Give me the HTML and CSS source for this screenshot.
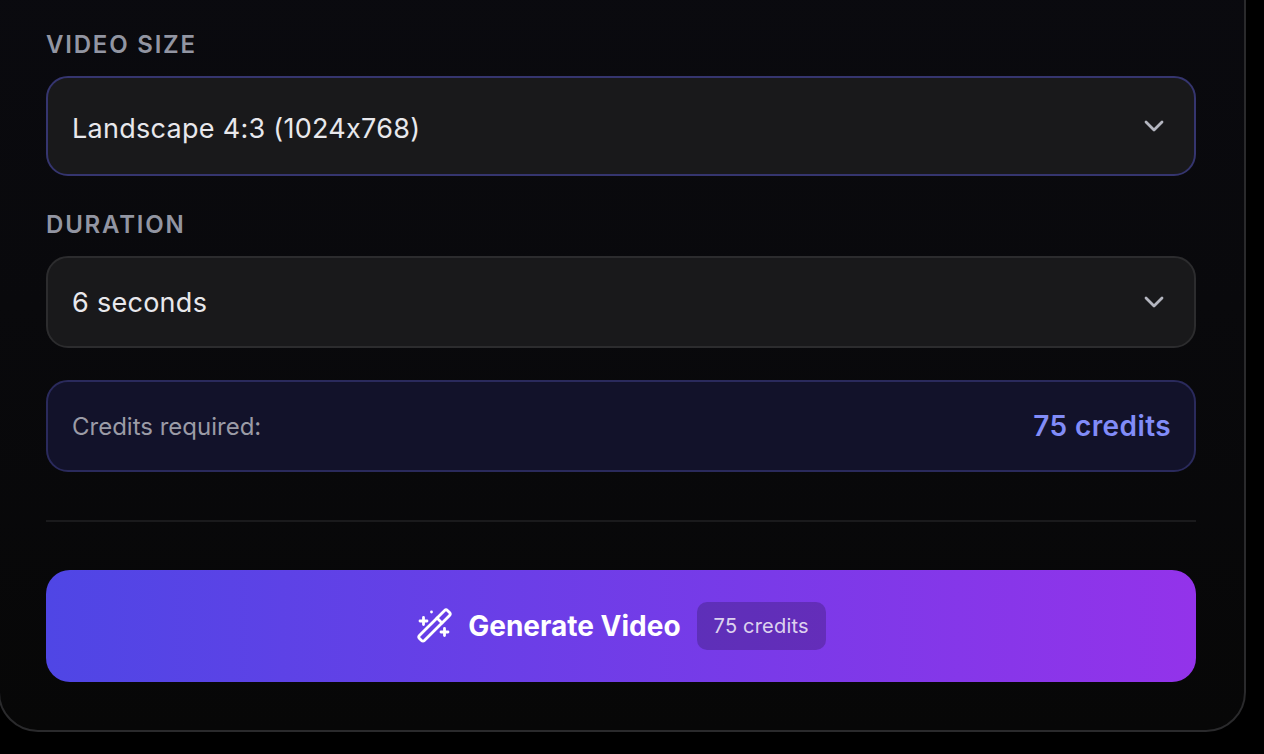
FILE: index.html
```html
<!DOCTYPE html>
<html lang="en">
<head>
    <meta charset="UTF-8">
    <meta name="viewport" content="width=device-width, initial-scale=1.0">
    <title>Generate Video</title>
    <link rel="stylesheet" href="styles.css">
</head>
<body>

<div class="card">
    <div class="field field-focus">
        <label class="field-label">Video Size</label>
        <div class="select select-focus">
            <span>Landscape 4:3 (1024x768)</span>
            <svg class="chevron" viewBox="0 0 20 12" fill="none" stroke="currentColor" stroke-width="2.8" stroke-linecap="round" stroke-linejoin="round"><path d="M2 2l8 8 8-8"/></svg>
        </div>
    </div>
    <div class="field">
        <label class="field-label">Duration</label>
        <div class="select">
            <span>6 seconds</span>
            <svg class="chevron" viewBox="0 0 20 12" fill="none" stroke="currentColor" stroke-width="2.8" stroke-linecap="round" stroke-linejoin="round"><path d="M2 2l8 8 8-8"/></svg>
        </div>
    </div>
    <div class="credits-box">
        <span class="credits-label">Credits required:</span>
        <span class="credits-value">75 credits</span>
    </div>
    <div class="divider"></div>
    <button class="generate-button">
        <svg class="wand" viewBox="0 0 36 36" fill="none" stroke="currentColor" stroke-width="2.8" stroke-linecap="round" stroke-linejoin="round">
            <rect x="-1.3" y="14" width="39.6" height="7" rx="2" transform="rotate(-45 18.5 17.5)"/>
            <path d="M21 10l5 5"/>
            <path d="M15.5 4v.1"/>
            <path d="M7.5 9.5v7M4 13h7"/>
            <path d="M28.5 20.5v7M25 24h7"/>
        </svg>
        <span>Generate Video</span>
        <span class="button-badge">75 credits</span>
    </button>
</div>

</body>
</html>
```

FILE: styles.css
```css
/* Base Styles */
body {
    margin: 0;
    height: 754px;
    overflow: hidden;
    background: #000;
    font-family: Inter, 'Noto Sans', sans-serif;
    font-feature-settings: "calt" 0;
}
.card {
    box-sizing: border-box;
    width: 1248px;
    height: 774px;
    margin: -42px 0 0 -2px;
    padding: 71px 48px 0 46px;
    background: linear-gradient(180deg, #0a0a0f 0%, #09090c 45%, #070707 100%);
    border: 2px solid #2a2a2c;
    border-radius: 40px;
}
.field {
    margin-bottom: 32px;
}
.field-focus {
    margin-bottom: 35px;
}
.field-label {
    display: block;
    margin-bottom: 17px;
    height: 28px;
    line-height: 28px;
    font-size: 24px;
    font-weight: 600;
    letter-spacing: 1.8px;
    text-transform: uppercase;
    color: #9295a2;
}
.select {
    box-sizing: border-box;
    display: flex;
    justify-content: space-between;
    align-items: center;
    height: 92px;
    padding: 0 30px 0 24px;
    background: #19191b;
    border: 2px solid #2c2c2e;
    border-radius: 22px;
    font-size: 27px;
    letter-spacing: 0.28px;
    color: #e8e8ec;
}
.select-focus {
    height: 100px;
    border-color: #35356f;
}
.select-focus span {
    padding-top: 5px;
}
.chevron {
    width: 20px;
    height: 12px;
    color: #b4b6c0;
}
.credits-box {
    box-sizing: border-box;
    display: flex;
    justify-content: space-between;
    align-items: center;
    height: 92px;
    padding: 0 23px 0 24px;
    background: #12122a;
    border: 2px solid #2a2a5c;
    border-radius: 22px;
}
.credits-label {
    font-size: 24px;
    color: #9b9ba6;
}
.credits-value {
    font-size: 28px;
    font-weight: 600;
    letter-spacing: 0.4px;
    color: #818cf8;
}
.divider {
    height: 2px;
    margin: 48px 0;
    background: #1a1a1c;
}
.generate-button {
    display: flex;
    justify-content: center;
    align-items: center;
    gap: 16px;
    width: 100%;
    height: 112px;
    padding: 0;
    background: linear-gradient(90deg, #4f46e5, #9333ea);
    color: #fff;
    border: none;
    border-radius: 24px;
    font-family: inherit;
    font-size: 28px;
    font-weight: 700;
}
.wand {
    width: 36px;
    height: 36px;
}
.button-badge {
    padding: 0 17px;
    height: 48px;
    line-height: 48px;
    background: rgba(0, 0, 0, 0.2);
    border-radius: 10px;
    font-size: 20px;
    font-weight: 400;
    letter-spacing: 0.2px;
    color: rgba(255, 255, 255, 0.8);
}
```
